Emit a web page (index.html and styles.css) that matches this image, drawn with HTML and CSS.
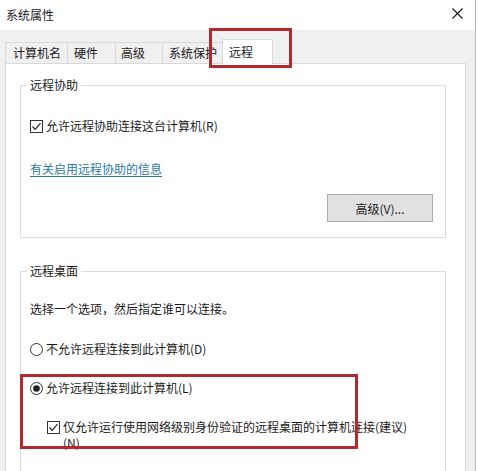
FILE: index.html
```html
<!DOCTYPE html>
<html lang="zh-CN">
<head>
    <meta charset="UTF-8">
    <meta name="viewport" content="width=device-width, initial-scale=1.0">
    <title>系统属性</title>
    <link rel="stylesheet" href="styles.css">
</head>
<body>
    <div class="window">
        <div class="titlebar">
            <span class="title">系统属性</span>
            <span class="close">
                <svg width="11" height="11" viewBox="0 0 11 11"><path d="M0.5 0.5 L10.5 10.5 M10.5 0.5 L0.5 10.5" stroke="#111" stroke-width="1.1" fill="none"/></svg>
            </span>
        </div>

        <div class="client">
            <div class="tabs">
                <div class="tab tab-name">计算机名</div>
                <div class="tab tab-hw">硬件</div>
                <div class="tab tab-adv">高级</div>
                <div class="tab tab-prot">系统保护</div>
                <div class="tab active">远程</div>
            </div>

            <div class="panel">
                <fieldset class="group assist">
                    <legend>远程协助</legend>
                    <label class="option first">
                        <svg class="box" width="13" height="13" viewBox="0 0 13 13"><rect x="0.5" y="0.5" width="12" height="12" fill="#fff" stroke="#333"/><path d="M2.5 6.5 L5.2 9.3 L10.5 3.2" stroke="#222" stroke-width="1.2" fill="none"/></svg>
                        <span>允许远程协助连接这台计算机(R)</span>
                    </label>
                    <a class="link" href="#">有关启用远程协助的信息</a>
                    <div class="actions">
                        <button class="btn">高级(V)...</button>
                    </div>
                </fieldset>

                <fieldset class="group desktop">
                    <legend>远程桌面</legend>
                    <p class="hint">选择一个选项，然后指定谁可以连接。</p>
                    <label class="option radio-off">
                        <svg class="box" width="13" height="13" viewBox="0 0 13 13"><circle cx="6.5" cy="6.5" r="6" fill="#fff" stroke="#333"/></svg>
                        <span>不允许远程连接到此计算机(D)</span>
                    </label>
                    <label class="option radio-on">
                        <svg class="box" width="13" height="13" viewBox="0 0 13 13"><circle cx="6.5" cy="6.5" r="6" fill="#fff" stroke="#333"/><circle cx="6.5" cy="6.5" r="3.3" fill="#222"/></svg>
                        <span>允许远程连接到此计算机(L)</span>
                    </label>
                    <label class="option sub">
                        <svg class="box" width="13" height="13" viewBox="0 0 13 13"><rect x="0.5" y="0.5" width="12" height="12" fill="#fff" stroke="#333"/><path d="M2.5 6.5 L5.2 9.3 L10.5 3.2" stroke="#222" stroke-width="1.2" fill="none"/></svg>
                        <span class="wrap">仅允许运行使用网络级别身份验证的远程桌面的计算机连接(建议)(N)</span>
                    </label>
                </fieldset>
            </div>
        </div>

        <div class="mark mark-tab"></div>
        <div class="mark mark-option"></div>
    </div>
</body>
</html>
```

FILE: styles.css
```css
html, body {
    margin: 0;
    padding: 0;
    overflow: hidden;
    background-color: #ffffff;
}

body {
    font-family: "Noto Sans CJK SC", "Noto Sans", sans-serif;
    font-size: 12px;
    color: #1a1a1a;
}

.window {
    position: relative;
    width: 475px;
    height: 471px;
    border-right: 1px solid #b9b9b9;
    overflow: hidden;
}

.titlebar {
    display: flex;
    justify-content: space-between;
    align-items: center;
    height: 29px;
    padding: 0 12px 1px 6px;
    background-color: #ffffff;
}

.title {
    line-height: 16px;
}

.close svg {
    display: block;
    margin-top: -2px;
}

.client {
    background-color: #f0f0f0;
    padding: 9px 0 0 5px;
    height: 100%;
}

.tabs {
    display: flex;
    align-items: flex-end;
    height: 24px;
}

.tab {
    box-sizing: border-box;
    height: 21px;
    line-height: 19px;
    padding-left: 7px;
    border: 1px solid #d9d9d9;
    border-bottom: none;
    border-right: none;
    background-color: #f0f0f0;
}

.tab-name { width: 62px; }
.tab-hw { width: 48px; padding-left: 6px; }
.tab-adv { width: 47px; padding-left: 5px; }
.tab-prot { width: 60px; padding-left: 6px; }

.tab.active {
    position: relative;
    z-index: 1;
    width: 51px;
    height: 25px;
    line-height: 23px;
    padding-left: 6px;
    margin-bottom: -1px;
    border-right: 1px solid #d9d9d9;
    background-color: #ffffff;
}

.panel {
    box-sizing: border-box;
    width: 461px;
    height: 420px;
    padding: 13px 0 0 14px;
    background-color: #ffffff;
    border: 1px solid #d9d9d9;
}

.group {
    box-sizing: border-box;
    width: 426px;
    margin: 0;
    padding: 0 0 0 9px;
    border: 1px solid #dcdcdc;
    min-inline-size: 0;
}

.group legend {
    margin-left: -3px;
    padding: 0 3px;
    line-height: 16px;
}

.option {
    display: flex;
    align-items: center;
    gap: 3px;
    line-height: 16px;
}

.option .box {
    flex: none;
}

.assist .first {
    margin-top: 25px;
}

.link {
    display: inline-block;
    margin-top: 27px;
    line-height: 16px;
    color: #2b7aa3;
    text-decoration: underline;
    text-underline-offset: 2px;
}

.actions {
    display: flex;
    justify-content: flex-end;
    padding: 17px 12px 15px 0;
}

.btn {
    width: 106px;
    height: 28px;
    padding: 0;
    font-family: inherit;
    font-size: 12px;
    color: #1a1a1a;
    background-color: #e1e1e1;
    border: 1px solid #adadad;
}

.desktop {
    margin-top: 25px;
    height: 240px;
}

.hint {
    margin: 22px 0 0;
    line-height: 16px;
}

.radio-off {
    margin-top: 24px;
}

.radio-on {
    margin-top: 23px;
}

.sub {
    align-items: flex-start;
    margin-top: 23px;
    padding-left: 17px;
}

.sub .box {
    margin-top: 2px;
}

.wrap {
    width: 352px;
}

.mark {
    position: absolute;
    box-sizing: border-box;
    border: 3px solid #b22a2e;
}

.mark-tab {
    left: 209px;
    top: 28px;
    width: 83px;
    height: 40px;
}

.mark-option {
    left: 20px;
    top: 374px;
    width: 338px;
    height: 75px;
}
```
